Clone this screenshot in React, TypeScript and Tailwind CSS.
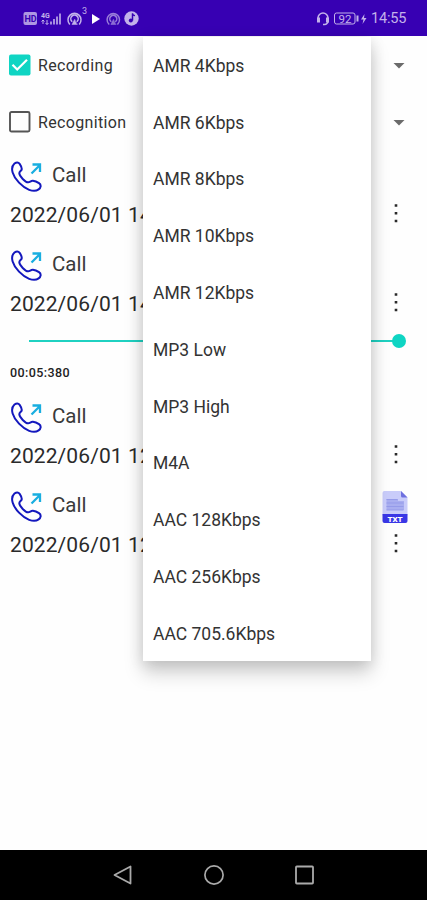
import React, { useState } from 'react';

const formats = [
  'AMR 4Kbps',
  'AMR 6Kbps',
  'AMR 8Kbps',
  'AMR 10Kbps',
  'AMR 12Kbps',
  'MP3 Low',
  'MP3 High',
  'M4A',
  'AAC 128Kbps',
  'AAC 256Kbps',
  'AAC 705.6Kbps',
];

const StatusBar = () => (
  <header className="h-9 shrink-0 bg-[#3700b3] flex items-center justify-between pl-[23px] pr-[20px] text-[#c3b2ea]">
    <svg width="117" height="24" viewBox="0 0 117 24" fill="none" className="shrink-0">
      <rect x="0.5" y="6" width="13.5" height="13" rx="2" fill="currentColor" fillOpacity="0.85" />
      <text x="1.5" y="16" fontSize="9" fontWeight="700" fontFamily="Roboto, sans-serif" fill="#3700b3">HD</text>
      <text x="18" y="11.5" fontSize="7" fontWeight="700" fontFamily="Roboto, sans-serif" fill="currentColor">4G</text>
      <path d="M20 14v4M18.500 15.500l1.500-1.500 1.500 1.500M24 14v4.500M22.500 17l1.500 1.500 1.500-1.500" stroke="currentColor" />
      <path d="M28 18.500v-3M31 18.500v-5.500M34 18.500v-8M37 18.500v-11" stroke="currentColor" strokeWidth="2" strokeOpacity="0.8" />
      <g stroke="currentColor" strokeWidth="1.500" strokeLinecap="round">
        <path d="M46.500 18a6.500 6.500 0 1 1 10 0M48.800 15.300a3.700 3.700 0 1 1 5.400 0" />
        <path d="M51.500 13.500l-2.500 5h5z" fill="currentColor" strokeWidth="0.500" />
        <path d="M85.800 18a6.200 6.200 0 1 1 9 0M87.800 15.300a3.500 3.500 0 1 1 5 0" strokeOpacity="0.7" />
        <path d="M90.300 13.500l-2.500 5h5z" fill="currentColor" fillOpacity="0.6" strokeWidth="0.300" />
      </g>
      <text x="59" y="8" fontSize="9" fontFamily="Roboto, sans-serif" fill="currentColor">3</text>
      <path d="M69 8v10l8-5z" fill="#fff" />
      <circle cx="108.500" cy="12.500" r="7.200" fill="currentColor" />
      <path d="M109.500 7.500v7" stroke="#3700b3" strokeWidth="1.500" />
      <path d="M109.500 7.500c0 1.500 1 2 2.500 2.200" stroke="#3700b3" strokeWidth="1.200" />
      <circle cx="107.800" cy="14.500" r="2" fill="#3700b3" />
    </svg>

    <div className="flex items-center">
      <svg width="52" height="24" viewBox="0 0 52 24" fill="none" className="-ml-[3px]">
        <path d="M2 15v-3a5 5 0 0 1 10 0v3a3.500 3.500 0 0 1-3.500 3.500H7" stroke="currentColor" strokeWidth="1.500" />
        <path d="M1 11.500h3v5H1zM10 11.500h3v5h-3z" fill="currentColor" />
        <rect x="18.500" y="7" width="20.500" height="11" rx="2" stroke="currentColor" />
        <path d="M41.500 9.500v6" stroke="currentColor" strokeWidth="2" />
        <text x="22.500" y="16.500" fontSize="11.500" fontFamily="Roboto, sans-serif" fill="currentColor">92</text>
        <path d="M48.500 8l-3.500 5.500h2.500L46.500 18l4-6h-2.500z" fill="currentColor" />
      </svg>
      <span className="mt-[2px] ml-px w-[38px] pl-[2px] text-[14.500px] leading-6 tracking-[-0.2px]">14:55</span>
    </div>
  </header>
);

const CallIcon = () => (
  <svg width="32" height="32" viewBox="0 0 32 32" fill="none" className="shrink-0">
    <path
      d="M4.500 2.500C6.500 1 8.300 1 9.500 2.600c1.300 1.900 2.300 3.800 2.300 5.300 0 1.900-2.600 2.500-2.500 4.400.2 3 6 9.200 8.900 9 1.700-.1 2.800-1.700 4.700-1.500 1.900.2 4.300 1.200 6.100 2.400 2.600 1.800 1.900 4.500-.4 6.200C18.500 36-5.500 11.500 4.500 2.500z"
      stroke="#1418bd"
      strokeWidth="2"
      strokeLinejoin="round"
    />
    <path d="M21.500 12.500l8-8M22.500 3.500h7.500v7.500" stroke="#19aee0" strokeWidth="2.300" />
  </svg>
);

const TxtIcon = () => (
  <svg width="26" height="33" viewBox="0 0 26 33">
    <path d="M2.500 0h16.500l6.500 6.500v18H.5v-22.500a2 2 0 0 1 2-2z" fill="#c9ccfa" />
    <path d="M19 0V5a1.500 1.500 0 0 0 1.500 1.500h5z" fill="#6e70df" />
    <path d="M4.500 8h11.500v2H22v9H4.500z" fill="#a9aef0" />
    <path d="M4.500 8.500h11M4.500 12h17M4.500 15.500h17M4.500 19h17" stroke="#959bea" strokeWidth="1" />
    <path d="M.5 23h25v7a2 2 0 0 1-2 2h-21a2 2 0 0 1-2-2z" fill="#3a37e6" />
    <text x="13" y="30.500" textAnchor="middle" fontSize="8" fontWeight="900" fontFamily="Roboto, sans-serif" fill="#fff">TXT</text>
  </svg>
);

const Caret = () => (
  <svg width="12" height="6" viewBox="0 0 12 6" className="ml-auto mt-[2px]">
    <path d="M.5 0h11L6 5.500z" fill="#6b6b6b" />
  </svg>
);

type OptionRowProps = { label: string; checked: boolean; onChange: () => void };

const OptionRow = ({ label, checked, onChange }: OptionRowProps) => (
  <div className="h-[57px] flex items-center pl-[9px] pr-[22px]">
    <button onClick={onChange} className="flex items-center">
      <svg width="22" height="22" viewBox="0 0 22 22" fill="none">
        {checked ? (
          <>
            <rect x="0" y="0.500" width="21.500" height="21" rx="2" fill="#0fd5c3" />
            <path d="M3.500 10.800l4.700 4.700L18 5.700" stroke="#fff" strokeWidth="2.200" />
          </>
        ) : (
          <rect x="1" y="1" width="19.500" height="19.500" rx="1.500" stroke="#555" strokeWidth="1.900" />
        )}
      </svg>
      <span className="ml-[7px] mt-[2px] text-[16px] tracking-[0.35px] leading-5 text-[#333]">{label}</span>
    </button>
    <Caret />
  </div>
);

const CallEntry = ({ date, hasText }: { date: string; hasText?: boolean }) => (
  <div className="h-[89.300px] pt-[11px] pl-[10px] pr-[17px] flex justify-between">
    <div>
      <div className="flex h-8">
        <CallIcon />
        <span className="ml-[10px] text-[20.500px] leading-7 text-[#3a3a3a]">Call</span>
      </div>
      <div className="mt-2 text-[21px] leading-7 tracking-[0.100px] text-[#2a2a2a] whitespace-nowrap">{date}</div>
    </div>
    <div className="w-[28px] flex flex-col items-center">
      <div className="h-[42px] mr-[3px]">{hasText && <TxtIcon />}</div>
      <svg width="4" height="20" viewBox="0 0 4 20" className="mr-px">
        <path d="M.7 1.200h2.600v2.600H.7zM.7 8.900h2.600v2.600H.7zM.7 16.700h2.600v2.600H.7z" fill="#2a2a2a" />
      </svg>
    </div>
  </div>
);

const Player = () => (
  <div className="h-[62.500px] pl-[29px] pr-[21px]">
    <div className="flex h-6 items-center">
      <div className="h-[2px] flex-1 bg-[#1fd1c1]" />
      <div className="-ml-[7px] h-[14px] w-[14px] rounded-full bg-[#0fd5c3]" />
    </div>
    <div className="-ml-[19px] mt-[10px] text-[12.500px] font-medium leading-5 tracking-[0.400px] text-[#222]">00:05:380</div>
  </div>
);

const FormatMenu = () => (
  <ul className="absolute left-[143px] top-[36.500px] w-[228px] bg-white shadow-[0_12px_18px_0_rgba(0,0,0,0.18),0_2px_14px_rgba(0,0,0,0.12)]">
    {formats.map((format) => (
      <li
        key={format}
        className="h-[56.800px] pt-[2px] pl-[10px] flex items-center text-[17.500px] text-[#333]"
      >
        {format}
      </li>
    ))}
  </ul>
);

const NavigationBar = () => (
  <nav className="mt-auto h-[50.500px] shrink-0 bg-black flex items-center justify-center gap-[71px]">
    <svg width="20" height="20" viewBox="0 0 20 20" fill="none">
      <path d="M17.500 1.500v17L1.500 10z" stroke="#aaa" strokeWidth="1.800" strokeLinejoin="round" />
    </svg>
    <svg width="20" height="20" viewBox="0 0 20 20" fill="none">
      <circle cx="10" cy="10" r="9.100" stroke="#aaa" strokeWidth="1.700" />
    </svg>
    <svg width="20" height="20" viewBox="0 0 20 20" fill="none">
      <rect x="1" y="1.500" width="17" height="17" rx="0.800" stroke="#aaa" strokeWidth="1.800" />
    </svg>
  </nav>
);

const App = () => {
  const [recording, setRecording] = useState(true);
  const [recognition, setRecognition] = useState(false);

  return (
    <div className="relative flex h-[900px] w-[427px] flex-col overflow-hidden bg-[#fefefe] font-[Roboto,sans-serif]">
      <StatusBar />
      <main>
        <OptionRow label="Recording" checked={recording} onChange={() => setRecording(!recording)} />
        <OptionRow label="Recognition" checked={recognition} onChange={() => setRecognition(!recognition)} />
        <CallEntry date="2022/06/01 14" />
        <CallEntry date="2022/06/01 14" />
        <Player />
        <CallEntry date="2022/06/01 12" />
        <CallEntry date="2022/06/01 12" hasText />
      </main>
      <FormatMenu />
      <NavigationBar />
    </div>
  );
};

export default App;
